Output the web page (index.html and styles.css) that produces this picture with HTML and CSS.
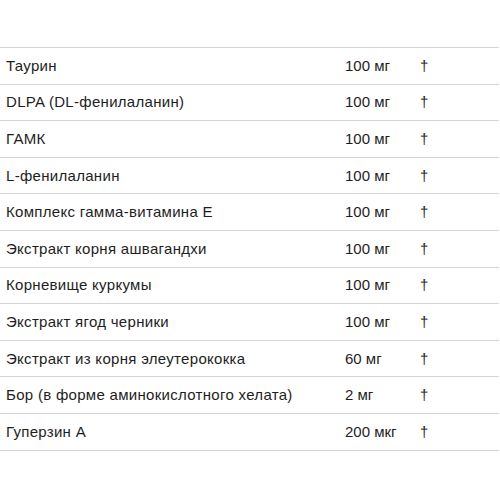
FILE: index.html
```html
<!DOCTYPE html>
<html lang="ru">
<head>
<meta charset="utf-8">
<link rel="stylesheet" href="styles.css">
</head>
<body>
<table class="facts">
<tbody>
<tr><td class="name">Таурин</td><td class="amt">100 мг</td><td class="dv">†</td></tr>
<tr><td class="name">DLPA (DL-фенилаланин)</td><td class="amt">100 мг</td><td class="dv">†</td></tr>
<tr><td class="name">ГАМК</td><td class="amt">100 мг</td><td class="dv">†</td></tr>
<tr><td class="name">L-фенилаланин</td><td class="amt">100 мг</td><td class="dv">†</td></tr>
<tr><td class="name">Комплекс гамма-витамина E</td><td class="amt">100 мг</td><td class="dv">†</td></tr>
<tr><td class="name">Экстракт корня ашвагандхи</td><td class="amt">100 мг</td><td class="dv">†</td></tr>
<tr><td class="name">Корневище куркумы</td><td class="amt">100 мг</td><td class="dv">†</td></tr>
<tr><td class="name">Экстракт ягод черники</td><td class="amt">100 мг</td><td class="dv">†</td></tr>
<tr><td class="name">Экстракт из корня элеутерококка</td><td class="amt">60 мг</td><td class="dv">†</td></tr>
<tr><td class="name">Бор (в форме аминокислотного хелата)</td><td class="amt">2 мг</td><td class="dv">†</td></tr>
<tr><td class="name">Гуперзин А</td><td class="amt">200 мкг</td><td class="dv">†</td></tr>
</tbody>
</table>
</body>
</html>
```
FILE: styles.css
```css
html, body {
  margin: 0;
  padding: 0;
  background: #fff;
}
body {
  font-family: "Liberation Sans", Arial, sans-serif;
  font-size: 15px;
  color: #1e1e1e;
}
.facts {
  margin-top: 47px;
  width: 499px;
  border-collapse: collapse;
}
.facts tr {
  border-top: 1px solid #d4d4d4;
  border-bottom: 1px solid #d4d4d4;
}
.facts td {
  height: 35.6px;
  padding: 0;
  vertical-align: middle;
  line-height: 16px;
}
.name {
  padding-left: 6px !important;
  width: 339px;
  letter-spacing: 0.3px;
}
.amt {
  width: 75px;
  letter-spacing: 0;
}
.dv {
  text-align: left;
}
```
